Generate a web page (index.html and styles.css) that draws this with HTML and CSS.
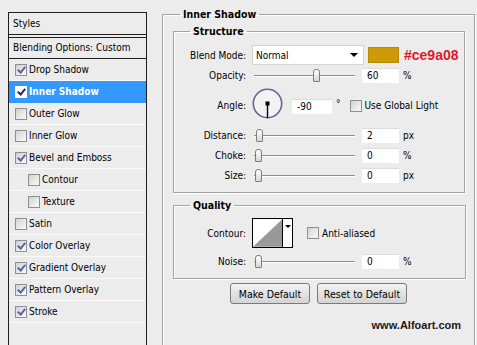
FILE: index.html
```html
<!DOCTYPE html>
<html>
<head>
<meta charset="utf-8">
<link rel="stylesheet" href="styles.css">
</head>
<body>
<div class="page">
  <div class="styles-panel">
    <div class="panel-head">Styles</div>
    <div class="panel-blend">Blending Options: Custom</div>
    <div class="row"><span class="cb on"></span>Drop Shadow</div>
    <div class="row sel"><span class="cb on"></span>Inner Shadow</div>
    <div class="row"><span class="cb"></span>Outer Glow</div>
    <div class="row"><span class="cb"></span>Inner Glow</div>
    <div class="row"><span class="cb on"></span>Bevel and Emboss</div>
    <div class="row sub"><span class="cb"></span>Contour</div>
    <div class="row sub"><span class="cb"></span>Texture</div>
    <div class="row"><span class="cb"></span>Satin</div>
    <div class="row"><span class="cb on"></span>Color Overlay</div>
    <div class="row"><span class="cb on"></span>Gradient Overlay</div>
    <div class="row"><span class="cb on"></span>Pattern Overlay</div>
    <div class="row"><span class="cb on"></span>Stroke</div>
  </div>

  <fieldset class="group outer">
    <legend class="outer-legend">Inner Shadow</legend>

    <fieldset class="group inner structure">
      <legend class="inner-legend">Structure</legend>
      <div class="frow r-blend">
        <span class="lbl">Blend Mode:</span>
        <div class="select"><span>Normal</span><span class="arrow"></span></div>
        <span class="swatch"></span>
        <span class="hex">#ce9a08</span>
      </div>
      <div class="frow r-op">
        <span class="lbl">Opacity:</span>
        <div class="slider"><span class="thumb" style="left: 58%"></span></div>
        <span class="num">60</span>
        <span class="unit">%</span>
      </div>
      <div class="frow r-angle">
        <span class="lbl lbl-angle">Angle:</span>
        <svg class="dial" width="31" height="31" viewBox="0 0 31 31">
          <circle cx="15.5" cy="15.5" r="14.2" fill="#f3f3f3" stroke="#5e6591" stroke-width="1.6"/>
          <line x1="15.5" y1="15.5" x2="15.5" y2="30" stroke="#000" stroke-width="1.4"/>
          <rect x="13.5" y="13.5" width="4" height="4" fill="#000"/>
        </svg>
        <span class="num num-angle">-90</span>
        <span class="deg">°</span>
        <span class="cb cb-global"></span>
        <span class="cb-text">Use Global Light</span>
      </div>
      <div class="frow r-dist">
        <span class="lbl">Distance:</span>
        <div class="slider"><span class="thumb" style="left: 2%"></span></div>
        <span class="num">2</span>
        <span class="unit">px</span>
      </div>
      <div class="frow r-small">
        <span class="lbl">Choke:</span>
        <div class="slider"><span class="thumb" style="left: 1%"></span></div>
        <span class="num">0</span>
        <span class="unit">%</span>
      </div>
      <div class="frow r-small">
        <span class="lbl">Size:</span>
        <div class="slider"><span class="thumb" style="left: 1%"></span></div>
        <span class="num">0</span>
        <span class="unit">px</span>
      </div>
    </fieldset>

    <fieldset class="group inner quality">
      <legend class="inner-legend">Quality</legend>
      <div class="frow r-contour">
        <span class="lbl">Contour:</span>
        <div class="contour">
          <svg class="curve" width="30" height="28" viewBox="0 0 30 28">
            <rect width="30" height="28" fill="#fff"/>
            <polygon points="0,28 30,0 30,28" fill="#999"/>
          </svg>
          <span class="c-drop"><span class="arrow small"></span></span>
        </div>
        <span class="cb cb-anti"></span>
        <span class="cb-text">Anti-aliased</span>
      </div>
      <div class="frow r-noise">
        <span class="lbl">Noise:</span>
        <div class="slider"><span class="thumb" style="left: 1%"></span></div>
        <span class="num">0</span>
        <span class="unit">%</span>
      </div>
    </fieldset>

    <div class="buttons">
      <button class="btn btn-make">Make Default</button>
      <button class="btn btn-reset">Reset to Default</button>
    </div>
    <div class="watermark">www.Alfoart.com</div>
  </fieldset>
</div>
</body>
</html>
```

FILE: styles.css
```css
html, body {
  margin: 0;
  padding: 0;
  background: #ececec;
  overflow: hidden;
}
body {
  font-family: "DejaVu Sans Condensed", "DejaVu Sans", Verdana, sans-serif;
  font-stretch: condensed;
  font-size: 10px;
  color: #000;
  width: 477px;
  height: 345px;
}
.page {
  display: flex;
  align-items: flex-start;
}

/* ---------- left styles list ---------- */
.styles-panel {
  margin: 12px 0 0 8px;
  width: 139px;
  height: 345px;
  box-sizing: border-box;
  border: 1px solid #1e1e1e;
  border-bottom: none;
  display: flex;
  flex-direction: column;
}
.panel-head {
  height: 21px;
  line-height: 21px;
  padding-left: 4px;
  border-bottom: 1px solid #1e1e1e;
}
.panel-blend {
  margin-top: 2px;
  height: 20px;
  line-height: 20px;
  padding-left: 4px;
  border-top: 1px solid #1e1e1e;
  border-bottom: 1px solid #1e1e1e;
}
.row {
  height: 21px;
  border-bottom: 1px solid #fafafa;
  display: flex;
  align-items: center;
  padding-left: 6px;
  gap: 2px;
}
.row.sub {
  padding-left: 19px;
}
.row.sel {
  background: #3399ff;
  color: #fff;
  font-weight: bold;
  border-bottom-color: #3399ff;
}

/* checkbox */
.cb {
  width: 10px;
  height: 10px;
  border: 1px solid #8f8f8f;
  background: linear-gradient(135deg, #d2d2d2, #fbfbfb);
  display: inline-block;
  position: relative;
  flex: none;
}
.cb.on::after {
  content: "";
  position: absolute;
  left: 3px;
  top: 0px;
  width: 3px;
  height: 6px;
  border: solid #5565a8;
  border-width: 0 2px 2px 0;
  transform: rotate(40deg);
}
.row.sel .cb {
  background: #fff;
  border-color: #fff;
}
.row.sel .cb.on::after {
  border-color: #1c2a6c;
}

/* ---------- fieldsets ---------- */
.group {
  margin: 0;
  padding: 0;
  border: 1px solid #a2a2a2;
  box-shadow: inset 1px 1px 0 #fff, 1px 1px 0 #fff;
  min-width: 0;
  box-sizing: border-box;
}
.outer {
  margin: 7px 0 0 15px;
  width: 313px;
  height: 360px;
}
.outer-legend {
  margin-left: 17px;
  padding: 0 3px;
  font-weight: bold;
  font-size: 10.5px;
  line-height: 14px;
}
.inner {
  margin-left: 10px;
  width: 292px;
}
.structure {
  margin-top: 3px;
  padding-bottom: 9px;
}
.quality {
  margin-top: 5px;
  padding-bottom: 9px;
  width: 293px;
}
.inner-legend {
  margin-left: 16px;
  padding: 0 3px;
  font-weight: bold;
  font-size: 10.5px;
  line-height: 14px;
}

/* ---------- form rows ---------- */
.frow {
  display: flex;
  align-items: center;
  height: 15px;
}
.lbl {
  width: 72px;
  text-align: right;
  margin-right: 6px;
  flex: none;
}
.r-blend {
  height: 20px;
  margin-top: 7px;
}
.r-op { margin-top: 3px; }
.r-angle {
  margin-top: 5px;
  height: 30px;
  align-items: flex-start;
}
.lbl-angle { margin-top: 12px; }
.r-dist { margin-top: 10px; }
.r-small { margin-top: 5px; }
.r-contour {
  margin-top: 6px;
  height: 30px;
}
.r-noise { margin-top: 6px; }

.select {
  width: 112px;
  height: 20px;
  box-sizing: border-box;
  background: #fff;
  border: 1px solid #d4d4d4;
  display: flex;
  align-items: center;
  justify-content: space-between;
  padding: 0 5px 0 3px;
}
.arrow {
  width: 0;
  height: 0;
  border-left: 4px solid transparent;
  border-right: 4px solid transparent;
  border-top: 4px solid #000;
}
.swatch {
  margin-left: 4px;
  width: 31px;
  height: 16px;
  box-sizing: border-box;
  background: #ce9a08;
  border: 1px solid #b98a08;
}
.hex {
  margin-left: 5px;
  color: #e2182a;
  font-family: "Liberation Sans", Arial, sans-serif;
  font-stretch: normal;
  font-weight: bold;
  font-size: 14px;
}

.slider {
  position: relative;
  margin-left: 2px;
  width: 101px;
  height: 15px;
  flex: none;
}
.slider::before {
  content: "";
  position: absolute;
  left: 0;
  right: 0;
  top: 7px;
  height: 1px;
  background: #8e8e8e;
  box-shadow: 0 1px 0 #fff;
}
.thumb {
  position: absolute;
  top: 1px;
  width: 5px;
  height: 11px;
  border: 1px solid #7d7d7d;
  border-radius: 3px 3px 1px 1px;
  background: linear-gradient(#ffffff, #d6d6d6);
}
.num {
  margin-left: 7px;
  width: 37px;
  height: 15px;
  box-sizing: border-box;
  background: #fff;
  border-top: 1px solid #dcdcdc;
  padding-left: 5px;
  line-height: 14px;
  flex: none;
}
.unit { margin-left: 4px; }

.dial { flex: none; }
.num-angle {
  margin-left: 9px;
  margin-top: 11px;
  width: 40px;
}
.deg { margin-left: 4px; margin-top: 10px; }
.cb-global { margin-left: 9px; margin-top: 12px; }
.r-angle .cb-text { margin-left: 3px; margin-top: 12px; }

.contour {
  width: 41px;
  height: 30px;
  box-sizing: border-box;
  border: 1px solid #000;
  display: flex;
  flex: none;
}
.curve { display: block; }
.c-drop {
  width: 10px;
  border-left: 1px solid #000;
  background: #fff;
  display: flex;
  justify-content: center;
  padding-top: 6px;
  box-sizing: border-box;
}
.arrow.small {
  border-left-width: 3px;
  border-right-width: 3px;
  border-top-width: 3px;
}
.cb-anti { margin-left: 14px; }
.r-contour .cb-text { margin-left: 3px; }

/* ---------- buttons ---------- */
.buttons {
  display: flex;
  justify-content: center;
  gap: 7px;
  margin-top: 4px;
}
.btn {
  font-family: "DejaVu Sans Condensed", "DejaVu Sans", Verdana, sans-serif;
  font-stretch: condensed;
  font-size: 10.5px;
  height: 21px;
  padding: 0;
  border: 1px solid #7a7a7a;
  border-radius: 3px;
  background: linear-gradient(#f4f4f4, #e2e2e2 50%, #d4d4d4);
  color: #000;
}
.btn-make { width: 80px; }
.btn-reset { width: 90px; }
.watermark {
  margin-top: 15px;
  text-align: right;
  padding-right: 13px;
  font-family: "Liberation Sans", Arial, sans-serif;
  font-stretch: normal;
  font-weight: bold;
  font-size: 11px;
  color: #1a1a1a;
}
```
